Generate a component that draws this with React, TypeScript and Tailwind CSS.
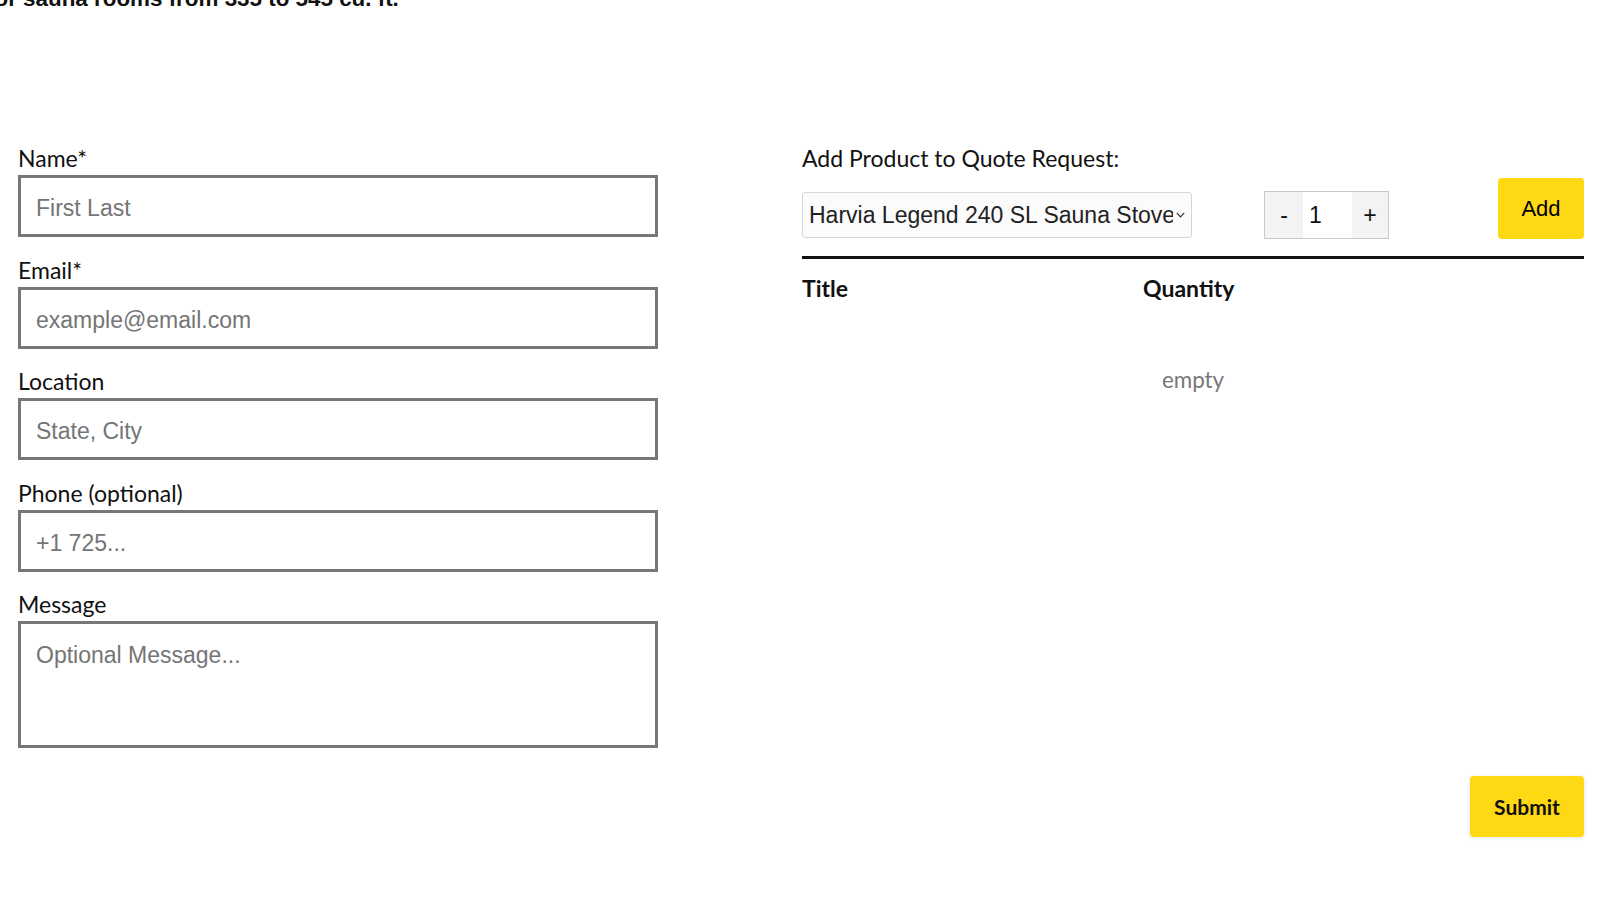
import React from "react";

const labelCls = "block font-['Lato',sans-serif] text-[23px] leading-[27px] text-[#111] mb-[3px]";
const inputCls =
  "block w-[640px] h-[62px] border-[3px] border-[#777] bg-white px-[15px] pt-[5px] font-['Liberation_Sans',Arial,sans-serif] text-[23px] text-[#333] placeholder:text-[#757575] outline-none";

function Field({ label, placeholder }: { label: string; placeholder: string }) {
  return (
    <div>
      <label className={labelCls}>{label}</label>
      <input className={inputCls} placeholder={placeholder} />
    </div>
  );
}

export default function App() {
  return (
    <div className="w-[1600px] h-[900px] overflow-hidden bg-white text-[#111]">
      <p className="-mt-[14px] -ml-[13px] whitespace-nowrap font-['Liberation_Sans',Arial,sans-serif] text-[22.4px] font-bold leading-[26px] text-[#111]">
        for sauna rooms from 335 to 545 cu. ft.
      </p>

      <div className="mt-[133px] flex pl-[18px]">
        {/* Left column: contact form */}
        <div className="flex w-[640px] flex-col gap-[19.5px]">
          <Field label="Name*" placeholder="First Last" />
          <Field label="Email*" placeholder="example@email.com" />
          <Field label="Location" placeholder="State, City" />
          <Field label="Phone (optional)" placeholder="+1 725..." />
          <div>
            <label className={labelCls}>Message</label>
            <textarea
              className="block h-[127px] w-[640px] resize-none border-[3px] border-[#777] bg-white px-[15px] pt-[14px] font-['Liberation_Sans',Arial,sans-serif] text-[23px] text-[#333] placeholder:text-[#757575] outline-none"
              placeholder="Optional Message..."
            />
          </div>
        </div>

        {/* Right column: product quote */}
        <div className="ml-[144px] w-[782px]">
          <div className="font-['Lato',sans-serif] text-[23px] leading-[27px] text-[#111]">
            Add Product to Quote Request:
          </div>
          <div className="mt-[6px] flex h-[61px] items-end">
            <div className="mb-[1px] flex h-[46px] w-[390px] items-center overflow-hidden rounded-[3px] border border-[#d6d6d6] bg-[#fbfbfb] pl-[6px] pr-[6px]">
              <span className="flex-1 overflow-hidden whitespace-nowrap font-['Liberation_Sans',Arial,sans-serif] text-[23px] leading-[26px] text-[#222]">
                Harvia Legend 240 SL Sauna Stove
              </span>
              <svg width="9" height="6" viewBox="0 0 9 6" className="ml-[3px] shrink-0">
                <polyline points="0.8,0.8 4.5,4.8 8.2,0.8" fill="none" stroke="#333" strokeWidth="1.2" />
              </svg>
            </div>
            <div className="ml-[72px] flex h-[48px] w-[125px] border border-[#c8c8c8] font-['Liberation_Sans',Arial,sans-serif] text-[23px] text-[#111]">
              <div className="flex w-[38px] items-center justify-center bg-[#f3f3f3]">-</div>
              <div className="flex w-[49px] items-center bg-white pl-[6px]">1</div>
              <div className="flex w-[36px] items-center justify-center bg-[#f3f3f3]">+</div>
            </div>
            <button className="ml-auto h-[61px] w-[86px] rounded-[4px] bg-[#ffd814] font-['Liberation_Sans',Arial,sans-serif] text-[22px] text-black">
              Add
            </button>
          </div>
          <div className="mt-[17px] h-[3px] bg-[#111]" />
          <div className="mt-[16px] flex font-['Lato',sans-serif] text-[23px] font-bold leading-[27px] text-[#111]">
            <div className="w-[341px]">Title</div>
            <div>Quantity</div>
          </div>
          <div className="mt-[64px] text-center font-['Lato',sans-serif] text-[22.4px] leading-[27px] text-[#777]">
            empty
          </div>
        </div>
      </div>

      <div className="mt-[28px] flex justify-end pr-[16px]">
        <button className="h-[61px] w-[114px] rounded-[4px] bg-[#ffd814] font-['Lato',sans-serif] text-[21px] font-bold text-[#111] shadow-[0_1px_4px_rgba(0,0,0,0.12)]">
          Submit
        </button>
      </div>
    </div>
  );
}
